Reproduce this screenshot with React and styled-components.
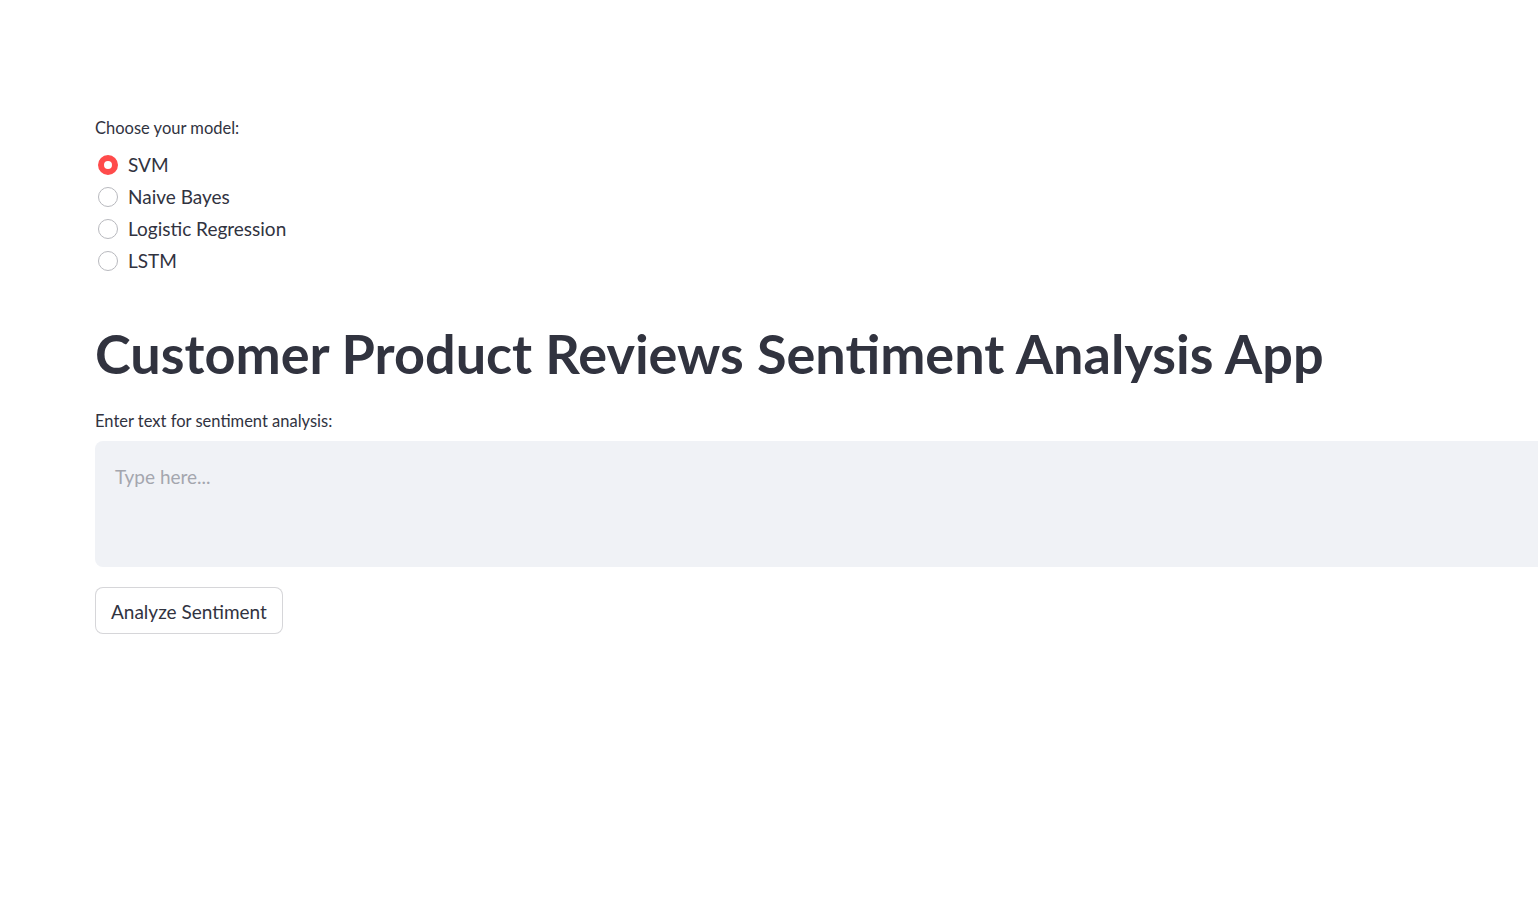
import React, { useState } from 'react';
import styled, { createGlobalStyle } from 'styled-components';

const models = ['SVM', 'Naive Bayes', 'Logistic Regression', 'LSTM'];

const App = () => {
  const [model, setModel] = useState('SVM');
  const [text, setText] = useState('');

  return (
    <>
      <GlobalStyle />
      <Main>
        <Block>
          <Label>Choose your model:</Label>
          <RadioGroup role="radiogroup">
            {models.map((m) => (
              <RadioRow key={m} onClick={() => setModel(m)}>
                <RadioDot $checked={model === m} />
                <RadioText>{m}</RadioText>
              </RadioRow>
            ))}
          </RadioGroup>
        </Block>

        <Title>Customer Product Reviews Sentiment Analysis App</Title>

        <Block>
          <Label>Enter text for sentiment analysis:</Label>
          <TextArea
            placeholder="Type here..."
            value={text}
            onChange={(e) => setText(e.target.value)}
          />
        </Block>

        <Button type="button">Analyze Sentiment</Button>
      </Main>
    </>
  );
};

export default App;

const GlobalStyle = createGlobalStyle`
  html, body {
    margin: 0;
    padding: 0;
    background: #ffffff;
    overflow: hidden;
  }
  body {
    font-family: Lato, "Noto Sans", sans-serif;
    color: #31333f;
  }
  * {
    box-sizing: border-box;
  }
`;

const Main = styled.main`
  display: flex;
  flex-direction: column;
  align-items: flex-start;
  padding: 117px 0 0 95px;
  width: 1600px;
`;

const Block = styled.div`
  display: flex;
  flex-direction: column;
  width: 100%;
`;

const Label = styled.div`
  font-size: 16.5px;
  line-height: 22px;
  color: #31333f;
`;

const RadioGroup = styled.div`
  display: flex;
  flex-direction: column;
  margin-top: 10px;
`;

const RadioRow = styled.label`
  display: flex;
  align-items: center;
  height: 32px;
  cursor: pointer;
`;

const RadioDot = styled.span`
  display: inline-block;
  width: 20px;
  height: 20px;
  margin-left: 3px;
  margin-right: 10px;
  border-radius: 50%;
  background: #ffffff;
  border: ${(p) => (p.$checked ? '6px solid #ff4b4b' : '1px solid #b8b9be')};
  flex-shrink: 0;
`;

const RadioText = styled.span`
  font-size: 19px;
  line-height: 24px;
  color: #31333f;
`;

const Title = styled.h1`
  margin: 44px 0 24px;
  font-size: 54px;
  font-weight: 700;
  line-height: 65px;
  color: #31333f;
  white-space: nowrap;
`;

const TextArea = styled.textarea`
  margin-top: 9px;
  width: 100%;
  height: 126px;
  padding: 24px 20px;
  border: none;
  border-radius: 8px;
  background: #f0f2f6;
  resize: none;
  outline: none;
  font-family: Lato, "Noto Sans", sans-serif;
  font-size: 19px;
  line-height: 24px;
  color: #31333f;

  &::placeholder {
    color: #a4a6ae;
  }
`;

const Button = styled.button`
  margin-top: 20px;
  height: 47px;
  padding: 1px 15px 0;
  border: 1px solid rgba(49, 51, 63, 0.2);
  border-radius: 8px;
  background: #ffffff;
  font-family: Lato, "Noto Sans", sans-serif;
  font-size: 19px;
  color: #31333f;
  cursor: pointer;
`;
